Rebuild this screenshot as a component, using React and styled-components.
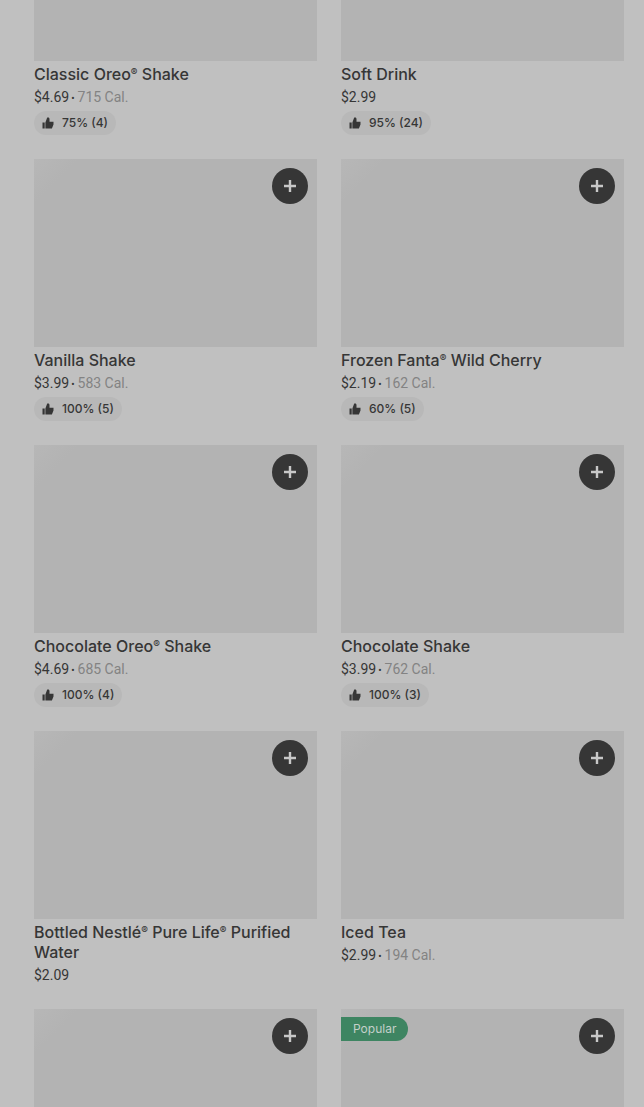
import React from 'react';
import styled, { createGlobalStyle } from 'styled-components';

const COLORS = {
    BACKGROUND: '#c0c0c0',
    MEDIA: '#b3b3b3',
    MEDIA_LIGHT: '#b7b7b7',
    PILL: '#b8b8b8',
    TEXT: '#363636',
    MUTED: '#838383',
    BUTTON: '#363636',
    BUTTON_ICON: '#c8c8c8',
    BADGE: '#3e8562',
    BADGE_TEXT: '#c4d0ca',
};

const GlobalStyle = createGlobalStyle`
    *, *::before, *::after {
        box-sizing: border-box;
    }

    body {
        background: ${COLORS.BACKGROUND};
        color: ${COLORS.TEXT};
        font-family: Inter, 'Liberation Sans', sans-serif;
        margin: 0;
    }
`;

const Viewport = styled.main`
    height: 100vh;
    overflow: hidden;
`;

// The menu is scrolled part of the way through its first row.
const Menu = styled.ul`
    display: grid;
    gap: 24px;
    grid-template-columns: repeat(2, minmax(0, 1fr));
    list-style: none;
    margin: -127px 0 0;
    padding: 0 20px 0 34px;
`;

const Card = styled.li`
    display: flex;
    flex-direction: column;
    gap: 3px;
`;

const Media = styled.div`
    background: linear-gradient(
        135deg,
        ${COLORS.MEDIA_LIGHT} 0,
        ${COLORS.MEDIA} 32px
    );
    height: 188px;
    position: relative;
`;

const AddButton = styled.button`
    align-items: center;
    background: ${COLORS.BUTTON};
    border: 0;
    border-radius: 50%;
    color: ${COLORS.BUTTON_ICON};
    cursor: pointer;
    display: flex;
    height: 36px;
    justify-content: center;
    padding: 0;
    position: absolute;
    right: 9px;
    top: 9px;
    width: 36px;
`;

const Badge = styled.span`
    background: ${COLORS.BADGE};
    border-radius: 0 12px 12px 0;
    color: ${COLORS.BADGE_TEXT};
    font-size: 12px;
    left: 0;
    line-height: 24px;
    padding: 0 12px;
    position: absolute;
    top: 8px;
`;

const Title = styled.h3`
    font-size: 16px;
    font-weight: 500;
    line-height: 20px;
    margin: 0;
`;

const Word = styled.span`
    white-space: nowrap;
`;

const Mark = styled.span`
    font-size: 10px;
    line-height: 0;
    vertical-align: 4px;
`;

const Price = styled.p`
    font-family: Roboto, 'Liberation Sans', sans-serif;
    font-size: 14px;
    line-height: 20px;
    margin: 0;
`;

const Calories = styled.span`
    color: ${COLORS.MUTED};
`;

const Dot = styled.span`
    font-size: 10px;
    line-height: 0;
    margin: 0 3px 0 2px;
`;

const Rating = styled.div`
    align-items: center;
    align-self: flex-start;
    background: ${COLORS.PILL};
    border-radius: 12px;
    display: flex;
    font-size: 12px;
    font-weight: 500;
    gap: 8px;
    line-height: 24px;
    margin-top: 1px;
    padding: 0 8px;
`;

const PlusIcon = () => (
    <svg width="12" height="12" viewBox="0 0 12 12" aria-hidden="true">
        <path d="M6 0v12M0 6h12" stroke="currentColor" strokeWidth="2.4" />
    </svg>
);

const ThumbIcon = () => (
    <svg width="12" height="12" viewBox="0 0 12 12" aria-hidden="true">
        <path
            d="M.5 5.5h2.2v6H.5zM3.4 5.4 5.2.6h.9c.9 0 1.4.7 1.4 1.5v2.7h4v2.6l-1.6 4.1H3.4z"
            fill="currentColor"
        />
    </svg>
);

const ITEMS = [
    {
        name: 'Classic Oreo® Shake',
        price: '$4.69',
        calories: '715 Cal.',
        rating: '75% (4)',
    },
    { name: 'Soft Drink', price: '$2.99', rating: '95% (24)' },
    {
        name: 'Vanilla Shake',
        price: '$3.99',
        calories: '583 Cal.',
        rating: '100% (5)',
    },
    {
        name: 'Frozen Fanta® Wild Cherry',
        price: '$2.19',
        calories: '162 Cal.',
        rating: '60% (5)',
    },
    {
        name: 'Chocolate Oreo® Shake',
        price: '$4.69',
        calories: '685 Cal.',
        rating: '100% (4)',
    },
    {
        name: 'Chocolate Shake',
        price: '$3.99',
        calories: '762 Cal.',
        rating: '100% (3)',
    },
    { name: 'Bottled Nestlé® Pure Life® Purified Water', price: '$2.09' },
    { name: 'Iced Tea', price: '$2.99', calories: '194 Cal.' },
    {},
    { badge: 'Popular' },
];

const renderName = name =>
    name.split(' ').map((word, index) => (
        <React.Fragment key={index}>
            {index > 0 && ' '}
            <Word>
                {word.replace('®', '')}
                {word.endsWith('®') && <Mark>®</Mark>}
            </Word>
        </React.Fragment>
    ));

const MenuItem = ({ name, price, calories, rating, badge }) => (
    <Card>
        <Media>
            {badge && <Badge>{badge}</Badge>}
            <AddButton type="button" aria-label="Quick add">
                <PlusIcon />
            </AddButton>
        </Media>
        {name && <Title>{renderName(name)}</Title>}
        {price && (
            <Price>
                {price}
                {calories && (
                    <>
                        <Dot>•</Dot>
                        <Calories>{calories}</Calories>
                    </>
                )}
            </Price>
        )}
        {rating && (
            <Rating>
                <ThumbIcon />
                {rating}
            </Rating>
        )}
    </Card>
);

const App = () => (
    <>
        <GlobalStyle />
        <Viewport>
            <Menu>
                {ITEMS.map((item, index) => (
                    <MenuItem key={index} {...item} />
                ))}
            </Menu>
        </Viewport>
    </>
);

export default App;
